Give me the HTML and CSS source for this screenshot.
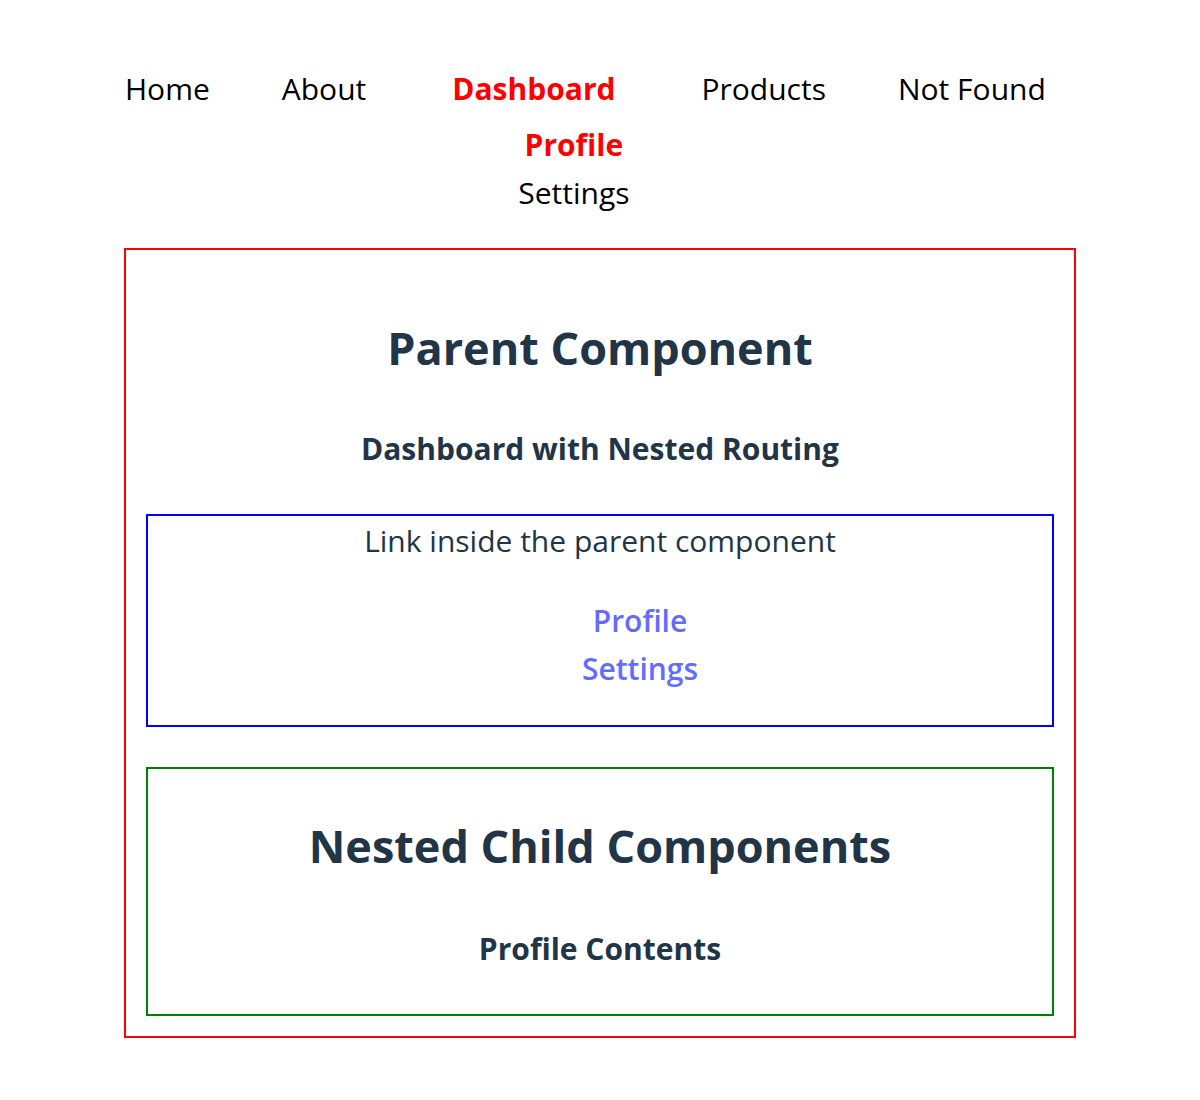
FILE: index.html
```html
<!DOCTYPE html>
<html lang="en">
<head>
    <meta charset="UTF-8">
    <meta name="viewport" content="width=device-width, initial-scale=1.0">
    <title>Nested Routing</title>
    <link rel="stylesheet" href="styles.css">
</head>
<body>
    <div id="app">
        <ul class="nav">
            <li><a href="#">Home</a></li>
            <li><a href="#">About</a></li>
            <li class="has-sub">
                <a href="#" class="active">Dashboard</a>
                <ul class="sub-nav">
                    <li><a href="#" class="active">Profile</a></li>
                    <li><a href="#">Settings</a></li>
                </ul>
            </li>
            <li><a href="#">Products</a></li>
            <li><a href="#">Not Found</a></li>
        </ul>

        <div class="parent">
            <h1>Parent Component</h1>
            <h2>Dashboard with Nested Routing</h2>
            <div class="links">
                <p>Link inside the parent component</p>
                <ul class="inner-links">
                    <li><a href="#">Profile</a></li>
                    <li><a href="#">Settings</a></li>
                </ul>
            </div>
            <div class="child">
                <h1>Nested Child Components</h1>
                <h2>Profile Contents</h2>
            </div>
        </div>
    </div>
</body>
</html>
```

FILE: styles.css
```css
body {
    margin: 0;
    font-family: "Open Sans", "Noto Sans", sans-serif;
    color: #213547;
}
#app {
    width: 952px;
    margin: 0 auto;
    text-align: center;
}
a {
    text-decoration: none;
    color: #000;
}
a.active {
    color: #f00;
    font-weight: bold;
}
.nav {
    display: flex;
    gap: 72px;
    list-style: none;
    margin: 65px 0 0;
    padding: 0 0 0 1px;
    font-size: 30px;
    line-height: 48px;
}
.sub-nav {
    list-style: none;
    margin: 8px 0 0;
    padding: 0 0 0 80px;
}
.parent {
    margin-top: 31px;
    border: 2px solid #f00;
    padding: 68px 20px 20px;
}
.parent h1 {
    margin: 0;
    font-size: 45px;
    line-height: 60px;
}
.parent h2 {
    margin: 51px 0 0;
    font-size: 30px;
    line-height: 40px;
}
.links {
    margin-top: 45px;
    border: 2px solid #00f;
    padding: 1px 0 32px;
}
.links p {
    margin: 0;
    font-size: 30px;
    line-height: 48px;
}
.inner-links {
    list-style: none;
    margin: 32px 0 0;
    padding: 0 0 0 80px;
    font-size: 30px;
    line-height: 48px;
    font-weight: 600;
}
.inner-links a {
    color: #646cff;
}
.child {
    margin-top: 40px;
    border: 2px solid #008000;
    padding: 47px 0 45px;
}
.child h1 {
    font-size: 45px;
}
.child h2 {
    margin-top: 53px;
}
```
